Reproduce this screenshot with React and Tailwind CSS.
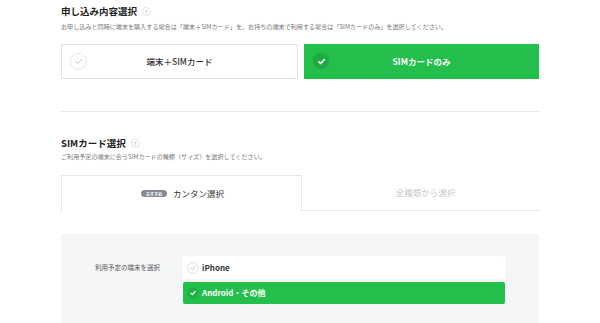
import React from 'react';

const Check = ({ className, stroke = '#bbb', w = 1.4 }) => (
  <svg viewBox="0 0 16 16" className={className} fill="none">
    <path d="M4.5 8.3 L7 10.6 L11.6 5.6" stroke={stroke} strokeWidth={w} strokeLinecap="round" strokeLinejoin="round" />
  </svg>
);

const Help = () => (
  <span className="ml-[5px] inline-flex h-[9px] w-[9px] items-center justify-center rounded-full border border-[#e2e2e2] text-[5px] leading-none text-[#999]">
    ?
  </span>
);

export default function App() {
  return (
    <div className="h-[323px] w-[600px] overflow-hidden bg-white font-['Noto_Sans_CJK_JP',sans-serif] text-[#222]">
      <div className="mx-auto w-[478px]">
        {/* 申し込み内容選択 */}
        <div className="flex items-center pt-[4px]">
          <h2 className="text-[9.5px] font-bold leading-[14px]">申し込み内容選択</h2>
          <Help />
        </div>
        <p className="mt-[5px] whitespace-nowrap text-[6.1px] leading-[8px] text-[#777]">
          お申し込みと同時に端末を購入する場合は「端末＋SIMカード」を、お持ちの端末で利用する場合は「SIMカードのみ」を選択してください。
        </p>
        <div className="mt-[13px] flex h-[35px] gap-[6px]">
          <div className="relative flex flex-1 items-center justify-center border border-[#e3e3e3] bg-white">
            <span className="absolute left-[8px] top-[8px] flex h-[17px] w-[17px] items-center justify-center rounded-full border border-[#e6e6e6]">
              <Check className="h-[13px] w-[13px]" stroke="#c4c4c4" w={1.2} />
            </span>
            <span className="text-[8.5px] font-medium text-[#333]">端末＋SIMカード</span>
          </div>
          <div className="relative flex flex-1 items-center justify-center bg-[#22bf4b]">
            <span className="absolute left-[9px] top-[9px] flex h-[16px] w-[16px] items-center justify-center rounded-full bg-[#1ea944]">
              <Check className="h-[13px] w-[13px]" stroke="#fff" w={1.8} />
            </span>
            <span className="text-[8.5px] font-bold text-white">SIMカードのみ</span>
          </div>
        </div>

        <div className="mt-[32px] h-px bg-[#e6e6e6]" />

        {/* SIMカード選択 */}
        <div className="mt-[24px] flex items-center">
          <h2 className="text-[9.5px] font-bold leading-[14px]">SIMカード選択</h2>
          <Help />
        </div>
        <p className="mt-[3px] whitespace-nowrap text-[6.1px] leading-[8px] text-[#777]">
          ご利用予定の端末に合うSIMカードの種類（サイズ）を選択してください。
        </p>

        <div className="mt-[14px] flex h-[36px]">
          <div className="flex flex-1 items-center justify-center border border-b-0 border-[#e6e6e6] pl-[2px]">
            <span className="mr-[6px] inline-flex h-[7px] w-[26px] items-center justify-center rounded-full bg-[#868a93] text-[4px] font-bold leading-none text-white">
              おすすめ
            </span>
            <span className="text-[8.5px] text-[#333]">カンタン選択</span>
          </div>
          <div className="flex flex-1 items-center justify-center border-b border-[#e6e6e6]">
            <span className="pl-[10px] text-[8.5px] text-[#c8c8c8]">全種類から選択</span>
          </div>
        </div>

        {/* 端末選択 */}
        <div className="mt-[23px] flex bg-[#f5f6f8] px-[34px] pb-[24px] pt-[22px]">
          <div className="w-[88px] pt-[7px] text-[6.5px] leading-[9px] text-[#555]">利用予定の端末を選択</div>
          <div className="flex flex-1 flex-col gap-[3px]">
            <div className="flex h-[23px] items-center rounded-[2px] bg-white pl-[4px]">
              <span className="flex h-[12px] w-[12px] items-center justify-center rounded-full border border-[#dedede]">
                <Check className="h-[10px] w-[10px]" stroke="#b5b5b5" w={1.3} />
              </span>
              <span className="ml-[3px] text-[8px] font-bold text-[#333]">iPhone</span>
            </div>
            <div className="flex h-[22px] items-center rounded-[2px] bg-[#22bf4b] pl-[4px]">
              <span className="flex h-[12px] w-[12px] items-center justify-center rounded-full bg-[#1fb146]">
                <Check className="h-[10px] w-[10px]" stroke="#fff" w={1.8} />
              </span>
              <span className="ml-[3px] text-[8px] font-bold text-white">Android・その他</span>
            </div>
          </div>
        </div>
      </div>
    </div>
  );
}
